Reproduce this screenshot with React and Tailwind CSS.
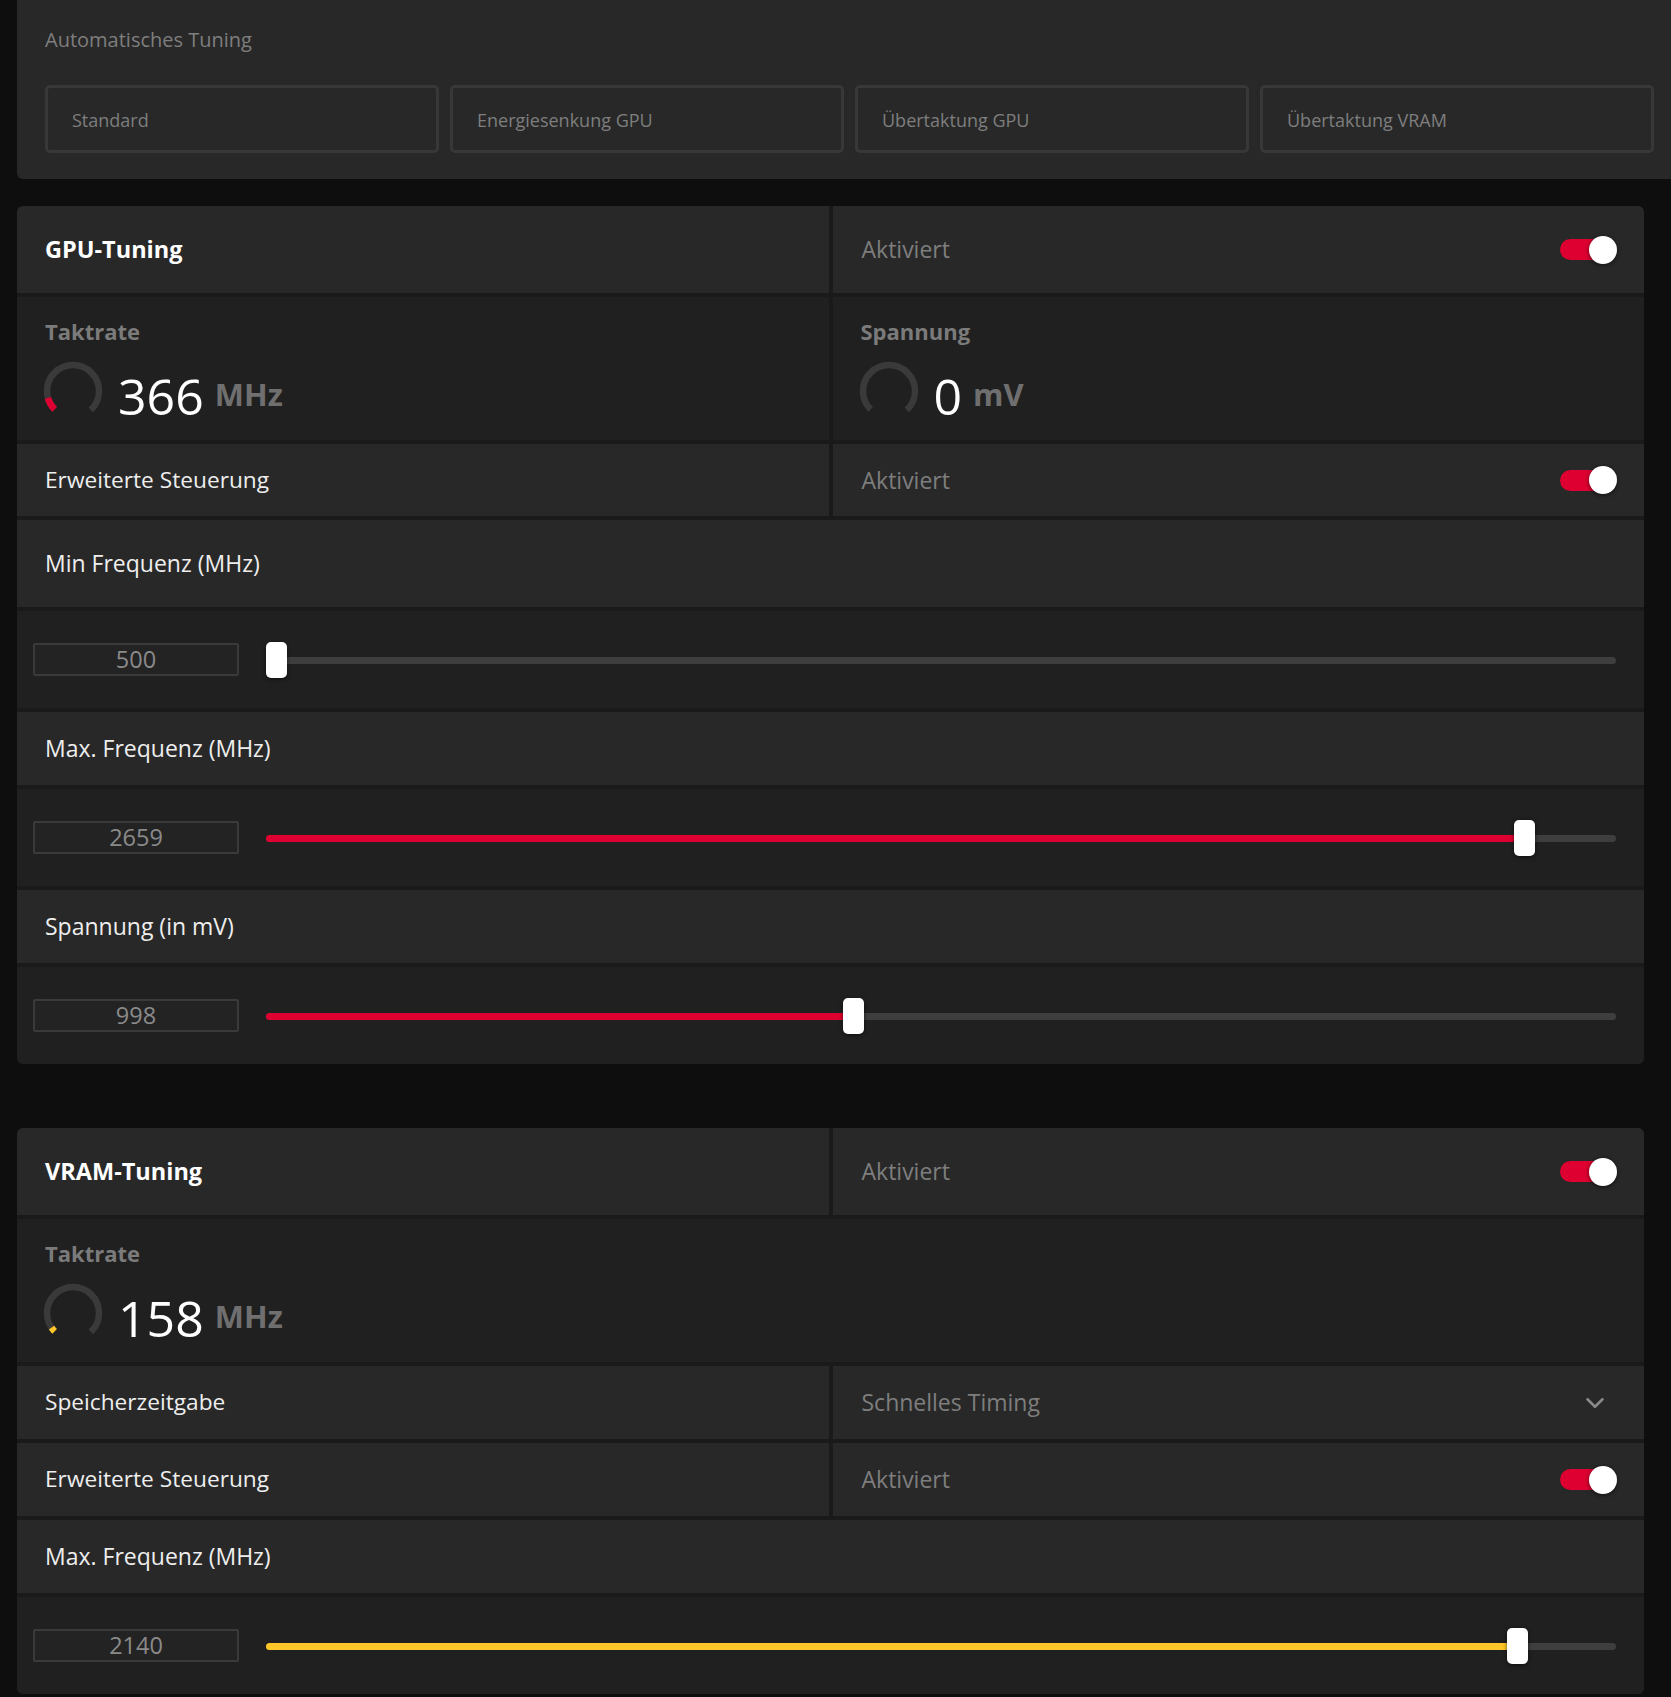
import { ChevronDown } from 'lucide-react';

const RED = '#de0030';
const YELLOW = '#ffc629';

function Toggle() {
  return (
    <div className="relative w-[57px] h-[28px] flex items-center">
      <div className="w-[52px] h-[21px] rounded-full bg-[#de0030]" />
      <div className="absolute right-0 top-0 w-[28px] h-[28px] rounded-full bg-white shadow-[0_1px_4px_rgba(0,0,0,0.6)]" />
    </div>
  );
}

function Gauge({ value, color }) {
  const r = 26;
  const c = 2 * Math.PI * r;
  const arc = c * 0.75;
  return (
    <svg width="60" height="60" viewBox="0 0 60 60" className="shrink-0">
      <g transform="rotate(135 30 30)">
        <circle cx="30" cy="30" r={r} fill="none" stroke="#3a3a3a" strokeWidth="6.5" strokeDasharray={`${arc} ${c}`} />
        {value > 0 && (
          <circle cx="30" cy="30" r={r} fill="none" stroke={color} strokeWidth="6.5" strokeDasharray={`${arc * value} ${c}`} />
        )}
      </g>
    </svg>
  );
}

function Stat({ label, value, unit, gauge, color }) {
  return (
    <div className="bg-[#202020] pl-[26px] pt-[20px]">
      <div className="text-[22px] leading-[28px] font-bold text-[#7b7b7b] pl-[2px]">{label}</div>
      <div className="flex items-center mt-[13px]">
        <Gauge value={gauge} color={color} />
        <div className="flex items-center ml-[15px]">
          <span className="text-[50px] leading-[56px] text-white pt-[10px]">{value}</span>
          <span className="text-[31px] leading-[36px] font-bold text-[#6f6f6f] ml-[11px] pt-[6px]">{unit}</span>
        </div>
      </div>
    </div>
  );
}

function SplitRow({ label, bold, right, h = 'h-[73px]' }) {
  return (
    <div className={`grid grid-cols-2 gap-[4px] ${h}`}>
      <div className="bg-[#282828] flex items-center pl-[28px]">
        <span className={bold ? 'text-[23.5px] font-bold text-white' : 'text-[22.7px] text-[#eeeeee]'}>{label}</span>
      </div>
      <div className="bg-[#282828] flex items-center justify-between pl-[29px] pr-[27px]">
        {right}
      </div>
    </div>
  );
}

function LabelRow({ label, h = 'h-[73px]' }) {
  return (
    <div className={`bg-[#282828] flex items-center pl-[28px] ${h}`}>
      <span className="text-[23px] text-[#eeeeee]">{label}</span>
    </div>
  );
}

function SliderRow({ value, frac, color }) {
  return (
    <div className="bg-[#202020] h-[97px] flex items-center pl-[16px] pr-[28px] gap-[27px]">
      <div className="w-[206px] h-[33px] shrink-0 border-2 border-[#3a3a3a] rounded-[2px] bg-[#232323] flex items-center justify-center text-[23.5px] text-[#8a8a8a]">
        {value}
      </div>
      <div className="relative flex-1 h-[7px] rounded-full bg-[#3e3e3e] mt-[2px]">
        {frac > 0 && (
          <div
            className="absolute left-0 top-0 h-full rounded-full"
            style={{ width: `calc(${frac} * (100% - 21px) + 10px)`, backgroundColor: color }}
          />
        )}
        <div
          className="absolute top-[-15px] w-[21px] h-[36px] rounded-[5px] bg-white shadow-[0_1px_4px_rgba(0,0,0,0.6)]"
          style={{ left: `calc(${frac} * (100% - 21px))` }}
        />
      </div>
    </div>
  );
}

const aktiviert = (
  <>
    <span className="text-[23px] text-[#7e7e7e]">Aktiviert</span>
    <Toggle />
  </>
);

export default function App() {
  const tuningButtons = ['Standard', 'Energiesenkung GPU', 'Übertaktung GPU', 'Übertaktung VRAM'];

  return (
    <div className="min-h-screen bg-[#0e0e0e] pb-[10px]" style={{ fontFamily: '"Open Sans", "Noto Sans", sans-serif' }}>
      {/* Automatisches Tuning */}
      <div className="ml-[17px] h-[179px] bg-[#282828] rounded-bl-md pl-[28px] pr-[17px] pt-[27px]">
        <div className="text-[20px] leading-[26px] text-[#7e7e7e]">Automatisches Tuning</div>
        <div className="grid grid-cols-4 gap-[11px] mt-[32px]">
          {tuningButtons.map((b) => (
            <button
              key={b}
              className="h-[68px] border-[3px] border-[#383838] rounded-[5px] text-left pl-[24px] pt-[3px] text-[18px] text-[#7e7e7e]"
            >
              {b}
            </button>
          ))}
        </div>
      </div>

      {/* GPU-Tuning */}
      <div className="ml-[17px] w-[1627px] mt-[27px] rounded-md overflow-hidden bg-[#1a1a1a] flex flex-col gap-[4px]">
        <SplitRow label="GPU-Tuning" bold right={aktiviert} h="h-[87px]" />
        <div className="grid grid-cols-2 gap-[4px] h-[143px]">
          <Stat label="Taktrate" value="366" unit="MHz" gauge={0.11} color={RED} />
          <Stat label="Spannung" value="0" unit="mV" gauge={0} color={RED} />
        </div>
        <SplitRow label="Erweiterte Steuerung" right={aktiviert} h="h-[72px]" />
        <LabelRow label="Min Frequenz (MHz)" h="h-[87px]" />
        <SliderRow value="500" frac={0} color={RED} />
        <LabelRow label="Max. Frequenz (MHz)" />
        <SliderRow value="2659" frac={0.9387} color={RED} />
        <LabelRow label="Spannung (in mV)" />
        <SliderRow value="998" frac={0.4345} color={RED} />
      </div>

      {/* VRAM-Tuning */}
      <div className="ml-[17px] w-[1627px] mt-[64px] rounded-md overflow-hidden bg-[#1a1a1a] flex flex-col gap-[4px]">
        <SplitRow label="VRAM-Tuning" bold right={aktiviert} h="h-[87px]" />
        <div className="h-[143px] grid">
          <Stat label="Taktrate" value="158" unit="MHz" gauge={0.04} color={YELLOW} />
        </div>
        <SplitRow
          label="Speicherzeitgabe"
          right={
            <>
              <span className="text-[23px] text-[#7e7e7e]">Schnelles Timing</span>
              <ChevronDown size={30} strokeWidth={2} className="text-[#8a8a8a] mr-[7px]" />
            </>
          }
        />
        <SplitRow label="Erweiterte Steuerung" right={aktiviert} />
        <LabelRow label="Max. Frequenz (MHz)" />
        <SliderRow value="2140" frac={0.9338} color={YELLOW} />
      </div>
    </div>
  );
}
